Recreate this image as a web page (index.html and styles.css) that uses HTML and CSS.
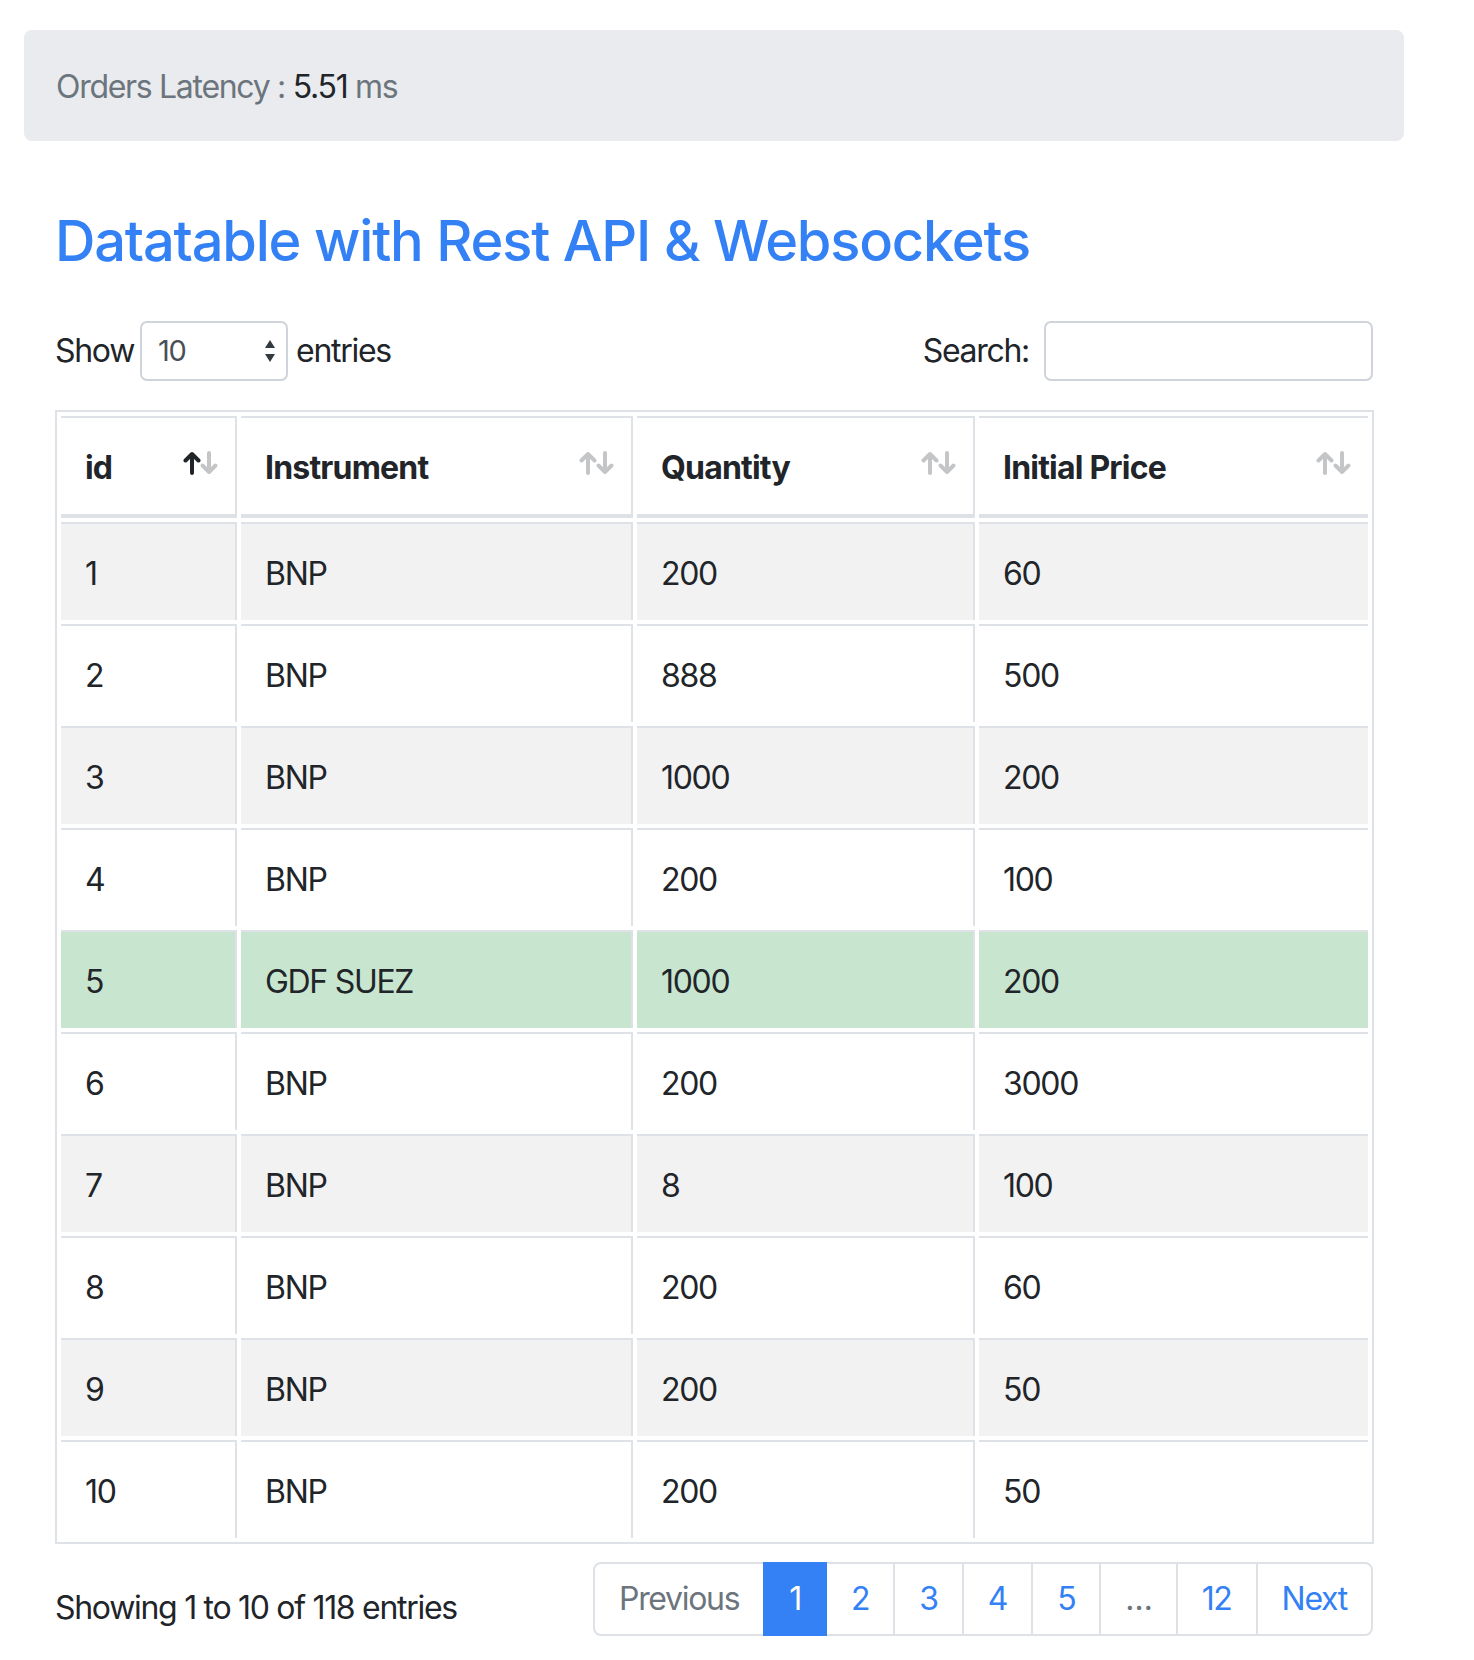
FILE: index.html
```html
<!DOCTYPE html>
<html>
<head>
<meta charset="utf-8">
<link rel="stylesheet" href="styles.css">
</head>
<body>
<div class="page">
  <div class="latency">Orders Latency : <span class="val">5.51</span> ms</div>
  <div class="content">
    <h3 class="title">Datatable with Rest API &amp; Websockets</h3>
    <div class="dt-top">
      <div class="len">
        <span>Show</span>
        <div class="select"><span>10</span>
          <svg class="sel-arrows" width="10" height="24" viewBox="0 0 10 24"><path d="M5 1 L10 9 L0 9 Z" fill="#343a40"/><path d="M0 15 L10 15 L5 23 Z" fill="#343a40"/></svg>
        </div>
        <span>entries</span>
      </div>
      <div class="filter">
        <span>Search:</span>
        <input class="search" type="search">
      </div>
    </div>
    <table class="grid">
      <thead>
        <tr>
          <th class="c-id sorted">id<svg class="sort" width="36" height="24" viewBox="0 0 36 24"><path class="a-up" d="M9 22 V3 M2.5 9.5 L9 3 L15.5 9.5"/><path class="a-down" d="M26 2 V21 M19.5 14.5 L26 21 L32.5 14.5"/></svg></th>
          <th class="c-ins">Instrument<svg class="sort" width="36" height="24" viewBox="0 0 36 24"><path class="a-up" d="M9 22 V3 M2.5 9.5 L9 3 L15.5 9.5"/><path class="a-down" d="M26 2 V21 M19.5 14.5 L26 21 L32.5 14.5"/></svg></th>
          <th class="c-qty">Quantity<svg class="sort" width="36" height="24" viewBox="0 0 36 24"><path class="a-up" d="M9 22 V3 M2.5 9.5 L9 3 L15.5 9.5"/><path class="a-down" d="M26 2 V21 M19.5 14.5 L26 21 L32.5 14.5"/></svg></th>
          <th class="c-price">Initial Price<svg class="sort" width="36" height="24" viewBox="0 0 36 24"><path class="a-up" d="M9 22 V3 M2.5 9.5 L9 3 L15.5 9.5"/><path class="a-down" d="M26 2 V21 M19.5 14.5 L26 21 L32.5 14.5"/></svg></th>
        </tr>
      </thead>
      <tbody>
        <tr><td>1</td><td>BNP</td><td>200</td><td>60</td></tr>
        <tr><td>2</td><td>BNP</td><td>888</td><td>500</td></tr>
        <tr><td>3</td><td>BNP</td><td>1000</td><td>200</td></tr>
        <tr><td>4</td><td>BNP</td><td>200</td><td>100</td></tr>
        <tr class="success"><td>5</td><td>GDF SUEZ</td><td>1000</td><td>200</td></tr>
        <tr><td>6</td><td>BNP</td><td>200</td><td>3000</td></tr>
        <tr><td>7</td><td>BNP</td><td>8</td><td>100</td></tr>
        <tr><td>8</td><td>BNP</td><td>200</td><td>60</td></tr>
        <tr><td>9</td><td>BNP</td><td>200</td><td>50</td></tr>
        <tr><td>10</td><td>BNP</td><td>200</td><td>50</td></tr>
      </tbody>
    </table>
    <div class="dt-bottom">
      <div class="info">Showing 1 to 10 of 118 entries</div>
      <ul class="pagination">
        <li class="pi disabled first">Previous</li>
        <li class="pi active">1</li>
        <li class="pi">2</li>
        <li class="pi">3</li>
        <li class="pi">4</li>
        <li class="pi">5</li>
        <li class="pi disabled">…</li>
        <li class="pi">12</li>
        <li class="pi last">Next</li>
      </ul>
    </div>
  </div>
</div>
</body>
</html>
```
FILE: styles.css
```css
* { box-sizing: border-box; }
body {
  margin: 0;
  background: #fff;
  font-family: Inter, "Liberation Sans", sans-serif;
  font-size: 32px;
  line-height: 1.5;
  letter-spacing: -1.3px;
  color: #212529;
}
.page {
  padding: 30px 0 0 24px;
  width: 1404px;
}
.latency {
  background: #eaebee;
  border-radius: 8px;
  padding: 33px 32px 30px;
  height: 111px;
  color: #6c757d;
}
.latency .val { color: #212529; }
.content { padding: 0 31px; }
.title {
  margin: 67px 0 0;
  font-size: 56px;
  font-weight: 500;
  line-height: 1.2;
  letter-spacing: -1.2px;
  color: #3381f5;
}
.dt-top {
  margin-top: 46px;
  height: 60px;
  display: flex;
  justify-content: space-between;
  align-items: center;
}
.len, .filter {
  display: flex;
  align-items: center;
}
.select {
  margin: 0 8px 0 6px;
  width: 148px;
  height: 60px;
  border: 2px solid #ced4da;
  border-radius: 7px;
  padding: 0 11px 0 16px;
  display: flex;
  align-items: center;
  justify-content: space-between;
  font-size: 29px;
  color: #495057;
}
.filter span { margin-right: 15px; }
.search {
  width: 329px;
  height: 60px;
  border: 2px solid #ced4da;
  border-radius: 7px;
  font: inherit;
  padding: 0 16px;
  margin: 0;
  outline: none;
}
.grid {
  margin-top: 29px;
  width: 1319px;
  table-layout: fixed;
  border-collapse: separate;
  border-spacing: 4px;
  border: 2px solid #dee2e6;
}
.grid th, .grid td {
  padding: 26px 24px 22px;
  text-align: left;
  vertical-align: top;
  border-top: 2px solid #dee2e6;
  border-right: 2px solid #dee2e6;
}
.grid th:last-child, .grid td:last-child { border-right: 0; }
.grid th {
  position: relative;
  font-weight: 700;
  letter-spacing: -0.8px;
  border-bottom: 4px solid #dee2e6;
}
.c-id { width: 176px; }
.c-ins { width: 392px; }
.c-qty { width: 338px; }
.c-price { width: 389px; }
.grid tbody tr:nth-child(odd) td { background: #f2f2f2; }
.grid tbody tr.success td { background: #c8e5cf; }
.sort {
  position: absolute;
  top: 33px;
  right: 16px;
  fill: none;
  stroke-width: 4;
  stroke-linecap: round;
  stroke-linejoin: round;
}
.sort path { stroke: #c4c5c7; }
.sorted .sort .a-up { stroke: #212529; }
.dt-bottom {
  display: flex;
  justify-content: space-between;
  align-items: flex-start;
  margin-top: 12px;
}
.info { padding-top: 28px; }
.pagination {
  display: flex;
  list-style: none;
  margin: 6px 0 0;
  padding: 0;
}
.pi {
  padding: 15px 24px;
  line-height: 40px;
  border: 2px solid #dee2e6;
  margin-left: -2px;
  color: #3381f5;
  background: #fff;
}
.pi.first { margin-left: 0; border-radius: 8px 0 0 8px; }
.pi.last { border-radius: 0 8px 8px 0; }
.pi.disabled { color: #6c757d; }
.pi.active {
  background: #3381f5;
  border-color: #3381f5;
  color: #fff;
  position: relative;
  z-index: 1;
}
```
